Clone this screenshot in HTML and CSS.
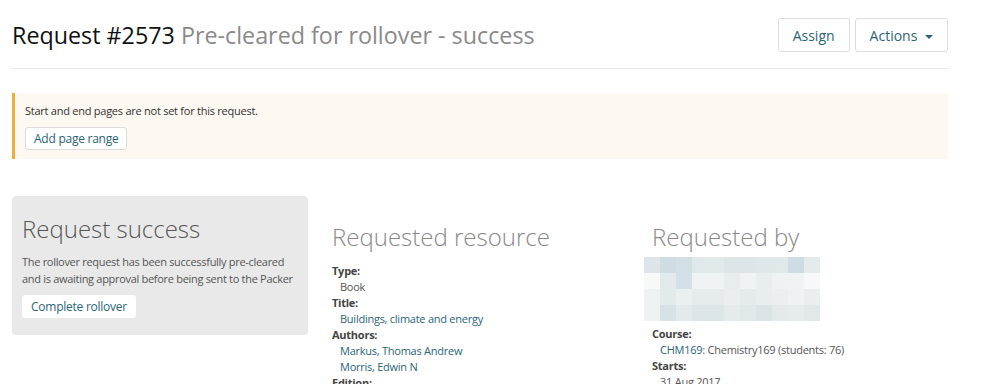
FILE: index.html
```html
<!DOCTYPE html>
<html>
<head>
	<title>Request #2573</title>
	<link rel="stylesheet" href="styles.css">
</head>
<body>
	<div class="page">
		<div class="pageHeader">
			<h1 class="pageTitle">Request #2573 <small>Pre-cleared for rollover - success</small></h1>
			<div class="headerButtons">
				<button class="btn">Assign</button>
				<button class="btn">Actions <span class="caret"></span></button>
			</div>
		</div>

		<div class="alert">
			<p>Start and end pages are not set for this request.</p>
			<button class="btn btnSmall">Add page range</button>
		</div>

		<div class="columns">
			<div class="statusPanel">
				<h2 class="panelTitle">Request success</h2>
				<p>The rollover request has been successfully pre-cleared and is awaiting approval before being sent to the Packer</p>
				<button class="btn btnSmall btnWhite">Complete rollover</button>
			</div>

			<div class="column">
				<h2 class="colTitle">Requested resource</h2>
				<dl class="details">
					<dt>Type:</dt>
					<dd>Book</dd>
					<dt>Title:</dt>
					<dd class="link">Buildings, climate and energy</dd>
					<dt>Authors:</dt>
					<dd class="link">Markus, Thomas Andrew</dd>
					<dd class="link">Morris, Edwin N</dd>
					<dt>Edition:</dt>
					<dd>2nd</dd>
				</dl>
			</div>

			<div class="column">
				<h2 class="colTitle">Requested by</h2>
				<div class="redacted">
					<span style="background:#dde5e8"></span><span style="background:#cfdde2"></span><span style="background:#d2dfe3"></span><span style="background:#dfe8ea"></span><span style="background:#e1e9eb"></span><span style="background:#dde5e8"></span><span style="background:#dde5e8"></span><span style="background:#dfe7ea"></span><span style="background:#dfe9e9"></span><span style="background:#cfdde3"></span><span style="background:#e5ebed"></span>
					<span style="background:#f7f9f8"></span><span style="background:#e3eaec"></span><span style="background:#d3e0e5"></span><span style="background:#eff3f4"></span><span style="background:#eff3f4"></span><span style="background:#e7edef"></span><span style="background:#eff3f4"></span><span style="background:#e8eef0"></span><span style="background:#eef2f3"></span><span style="background:#f0f3f4"></span><span style="background:#f6f8f9"></span>
					<span style="background:#eef2f3"></span><span style="background:#e3eaec"></span><span style="background:#eaeff0"></span><span style="background:#e6ecee"></span><span style="background:#e6ecee"></span><span style="background:#eaeef0"></span><span style="background:#e5ebed"></span><span style="background:#e8edef"></span><span style="background:#ebeff1"></span><span style="background:#eef2f3"></span><span style="background:#eaeef0"></span>
					<span style="background:#eef2f3"></span><span style="background:#d6e2e5"></span><span style="background:#e3eaec"></span><span style="background:#dce5e8"></span><span style="background:#dce5e8"></span><span style="background:#e5ebed"></span><span style="background:#e1e8ea"></span><span style="background:#dae3e6"></span><span style="background:#e4eaec"></span><span style="background:#e6ecee"></span><span style="background:#e2e8ea"></span>
				</div>
				<dl class="details">
					<dt>Course:</dt>
					<dd><span class="link">CHM169</span>: Chemistry169 (students: 76)</dd>
					<dt>Starts:</dt>
					<dd>31 Aug 2017</dd>
				</dl>
			</div>
		</div>
	</div>
</body>
</html>
```

FILE: styles.css
```css
:root {
	--textColor: #444;
	--mutedColor: #888;
	--linkColor: #2a6577;
	--borderColor: #dddddd;
}

body {
	margin: 0;
	font-family: "Open Sans", "Liberation Sans", sans-serif;
	color: var(--textColor);
	background-color: #fff;
}

.page {
	width: 936px;
	padding: 0 12px;
}

.pageHeader {
	display: flex;
	justify-content: space-between;
	align-items: flex-start;
	padding-top: 18px;
	padding-bottom: 16px;
	border-bottom: 1px solid #e8e8e8;
}

.pageTitle {
	margin: 0;
	font-size: 23.3px;
	font-weight: 400;
	line-height: 34px;
	color: #111;
}

.pageTitle small {
	font-size: inherit;
	color: #8a8a8a;
}

.headerButtons {
	display: flex;
	gap: 5px;
}

.btn {
	font-family: inherit;
	font-size: 14px;
	color: var(--linkColor);
	background-color: #fff;
	border: 1px solid var(--borderColor);
	border-radius: 3px;
	height: 34px;
	padding: 0 14px;
}

.caret {
	display: inline-block;
	width: 0;
	height: 0;
	margin-left: 4px;
	vertical-align: middle;
	border-top: 4px solid var(--linkColor);
	border-left: 4px solid transparent;
	border-right: 4px solid transparent;
}

.btnSmall {
	font-size: 12px;
	letter-spacing: -0.25px;
	height: 23px;
	padding: 0 8px;
}

.btnWhite {
	border-color: #fff;
}

.alert {
	margin-top: 24px;
	padding: 10px 10px 9px;
	background-color: #fdf8f1;
	border-left: 3px solid #f0ad3c;
}

.alert p {
	margin: 0 0 7px;
	font-size: 11px;
	letter-spacing: -0.25px;
	line-height: 16px;
	color: #333;
}

.columns {
	display: grid;
	grid-template-columns: repeat(3, 296px);
	gap: 24px;
	margin-top: 37px;
}

.statusPanel {
	background-color: #e9e9e9;
	border-radius: 4px;
	padding: 16px 10px 17px;
	align-self: start;
}

.panelTitle {
	margin: 0 0 7px;
	font-size: 24px;
	font-weight: 300;
	line-height: 34px;
	color: #555;
}

.statusPanel p {
	margin: 0 0 7px;
	font-size: 11px;
	letter-spacing: -0.3px;
	line-height: 17px;
	color: #555;
}

.colTitle {
	margin: 24px 0 9px;
	font-size: 24px;
	font-weight: 300;
	line-height: 34px;
	color: var(--mutedColor);
}

.details {
	margin: 0;
	font-size: 11px;
	letter-spacing: -0.25px;
	line-height: 16px;
}

.details dt {
	font-weight: 700;
	color: #444;
}

.details dd {
	margin-left: 8px;
	color: #555;
}

.link {
	color: var(--linkColor);
}

.details dd.link {
	color: var(--linkColor);
}

.redacted {
	display: grid;
	grid-template-columns: repeat(11, 16px);
	grid-auto-rows: 16px;
	margin: -6px 0 5px -8px;
}
```
